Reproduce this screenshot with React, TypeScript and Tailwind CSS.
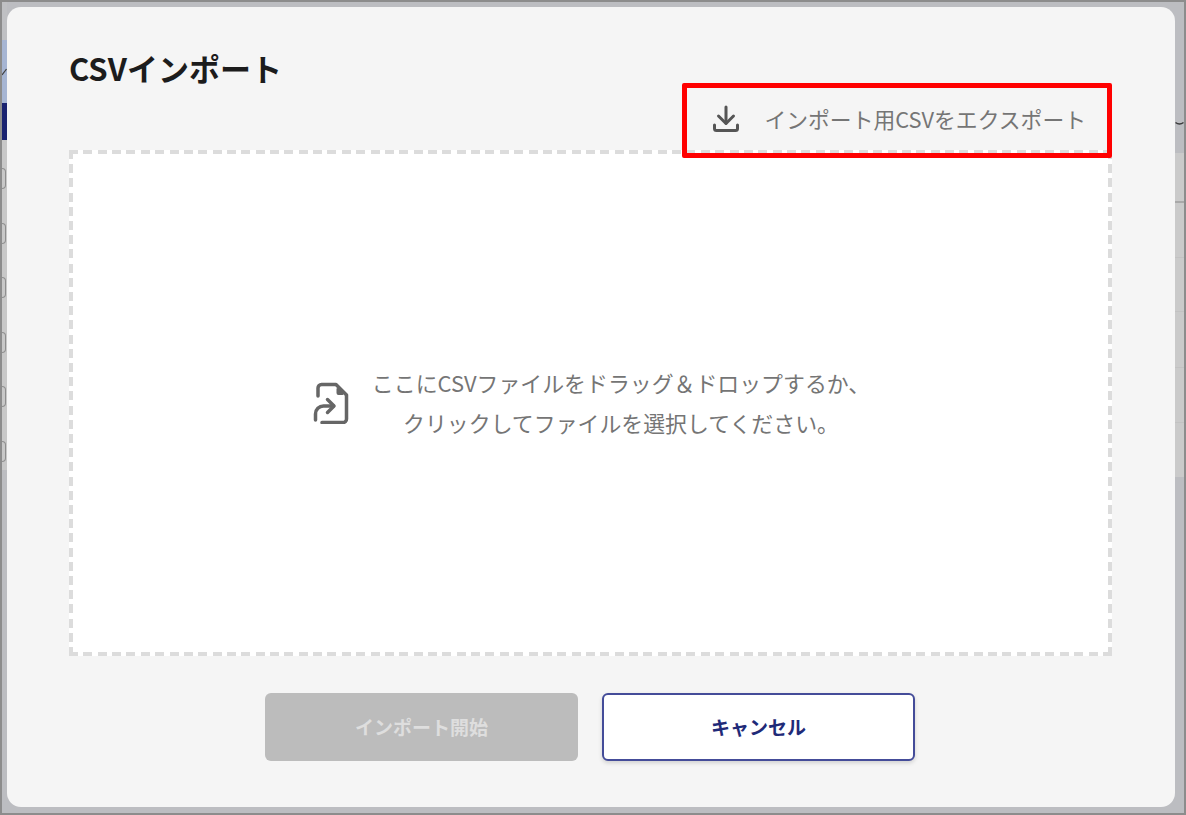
const font = "font-['Noto_Sans_CJK_JP','Noto_Sans',sans-serif]";

const leftPills = [1, 2, 3, 4, 5, 6];

function DownloadIcon() {
  return (
    <svg width="28" height="28" viewBox="0 0 28 28" fill="none" stroke="#555" strokeWidth="3" strokeLinecap="round" strokeLinejoin="round">
      <path d="M14 2v16" />
      <path d="M6.500 11 14 18.500 21.500 11" />
      <path d="M2.500 20v3.500a2 2 0 0 0 2 2h19a2 2 0 0 0 2-2V20" />
    </svg>
  );
}

function FileArrowIcon() {
  return (
    <svg width="36" height="42" viewBox="0 0 36 42" fill="none" stroke="#666" strokeWidth="3.500" strokeLinecap="round" strokeLinejoin="round">
      <path d="M5 14V6a3.500 3.500 0 0 1 3.500-3.500H23L33.500 13v24a3.500 3.500 0 0 1-3.500 3.500H9" />
      <path d="M24.500 7v4a1 1 0 0 0 1 1h4z" fill="#666" strokeWidth="2" />
      <path d="M2.500 38v-6a8 8 0 0 1 8-8h10" />
      <path d="M14.500 17.500 21 24l-6.500 6.500" />
    </svg>
  );
}

// what is left of the page behind the dialog, on the left edge
function LeftSliver() {
  return (
    <div className="flex w-[5px] shrink-0 flex-col">
      <div className="h-[38px] bg-[#bfc0c3]" />
      <div className="flex h-[63px] items-center bg-[#a6b5d3]">
        <svg width="5" height="8" viewBox="0 0 5 8" fill="none" stroke="#3d3d3d" strokeWidth="1.200">
          <path d="M0 7 4.500 1" />
        </svg>
      </div>
      <div className="h-[37px] bg-[#1a2370]" />
      <div className="flex h-[330px] flex-col gap-[33.500px] bg-[#c8c8c8] pt-[28px]">
        {leftPills.map((p) => (
          <div key={p} className="h-[21px] w-[4px] rounded-r-sm border border-l-0 border-[#8e8e8e]" />
        ))}
      </div>
      <div className="flex-1 bg-[#bcbdc1]" />
    </div>
  );
}

// same for the right edge, with the table row lines
function RightSliver() {
  return (
    <div className="flex w-[9px] shrink-0 flex-col">
      <div className="flex h-[151px] flex-col bg-[#bcbdc1] pt-[119px]">
        <svg width="9" height="5" viewBox="0 0 9 5" fill="none" stroke="#3a3a3a" strokeWidth="1.500">
          <path d="M0.500 1.500q4 3 8 0" />
        </svg>
      </div>
      <div className="flex h-[324px] flex-col bg-[#cacaca] pt-[48px]">
        <div className="h-[2px] bg-[#a9a9a9]" />
        <div className="mt-[54px] h-px bg-[#c2c2c2]" />
        <div className="mt-[53px] h-px bg-[#c2c2c2]" />
        <div className="mt-[55px] h-px bg-[#c2c2c2]" />
        <div className="mt-[54px] h-px bg-[#c2c2c2]" />
      </div>
      <div className="flex-1 bg-[#bcbdc1]" />
    </div>
  );
}

export default function App() {
  return (
    <div className={`flex h-[815px] w-[1186px] overflow-hidden border-2 border-[#8c8c8c] bg-[#bcbdc1] ${font}`}>
      <LeftSliver />

      <div className="relative mt-[5px] mb-[6px] flex w-[1168px] flex-col rounded-[14px] bg-[#f5f5f5] px-[62px] pt-[41px]">
        <h1 className="text-[31px] leading-[40px] font-bold text-[#1c1c1c]">CSVインポート</h1>

        <div className="mt-[10px] flex h-[42px] items-center justify-end pr-[27px] text-[21.800px] text-[#757575]">
          <DownloadIcon />
          <span className="ml-[24px]">インポート用CSVをエクスポート</span>
        </div>

        <div className="mt-[10px] flex h-[506px] w-[1043px] items-center justify-center gap-[23px] bg-white bg-[repeating-linear-gradient(90deg,#dcdcdc_0_9px,transparent_9px_14.360px),repeating-linear-gradient(90deg,#dcdcdc_0_9px,transparent_9px_14.360px),repeating-linear-gradient(180deg,#dcdcdc_0_9px,transparent_9px_14.200px),repeating-linear-gradient(180deg,#dcdcdc_0_9px,transparent_9px_14.200px)] bg-[size:100%_4px,100%_4px,4px_100%,4px_100%] bg-[position:0_0,0_100%,0_0,100%_0] bg-no-repeat">
          <div className="ml-[2px]">
            <FileArrowIcon />
          </div>
          <p className="text-center text-[21.900px] leading-[40px] text-[#757575]">
            ここにCSVファイルをドラッグ＆ドロップするか、
            <br />
            クリックしてファイルを選択してください。
          </p>
        </div>

        <div className="mt-[37px] flex justify-center gap-[24px] pr-[2px]">
          <button className="h-[68px] w-[313px] rounded-[6px] bg-[#bcbcbc] text-[19px] font-bold text-[#dedede]">インポート開始</button>
          <button className="h-[68px] w-[313px] rounded-[6px] border-2 border-[#444c99] bg-white text-[19px] font-bold text-[#1f2a78] shadow-[0_2px_4px_rgba(0,0,0,0.15)]">キャンセル</button>
        </div>

        {/* Annotation box over the export link */}
        <div className="absolute top-[76px] left-[675px] h-[75px] w-[430px] rounded-[2px] border-[5px] border-[#ff0000]" />
      </div>

      <RightSliver />
    </div>
  );
}
